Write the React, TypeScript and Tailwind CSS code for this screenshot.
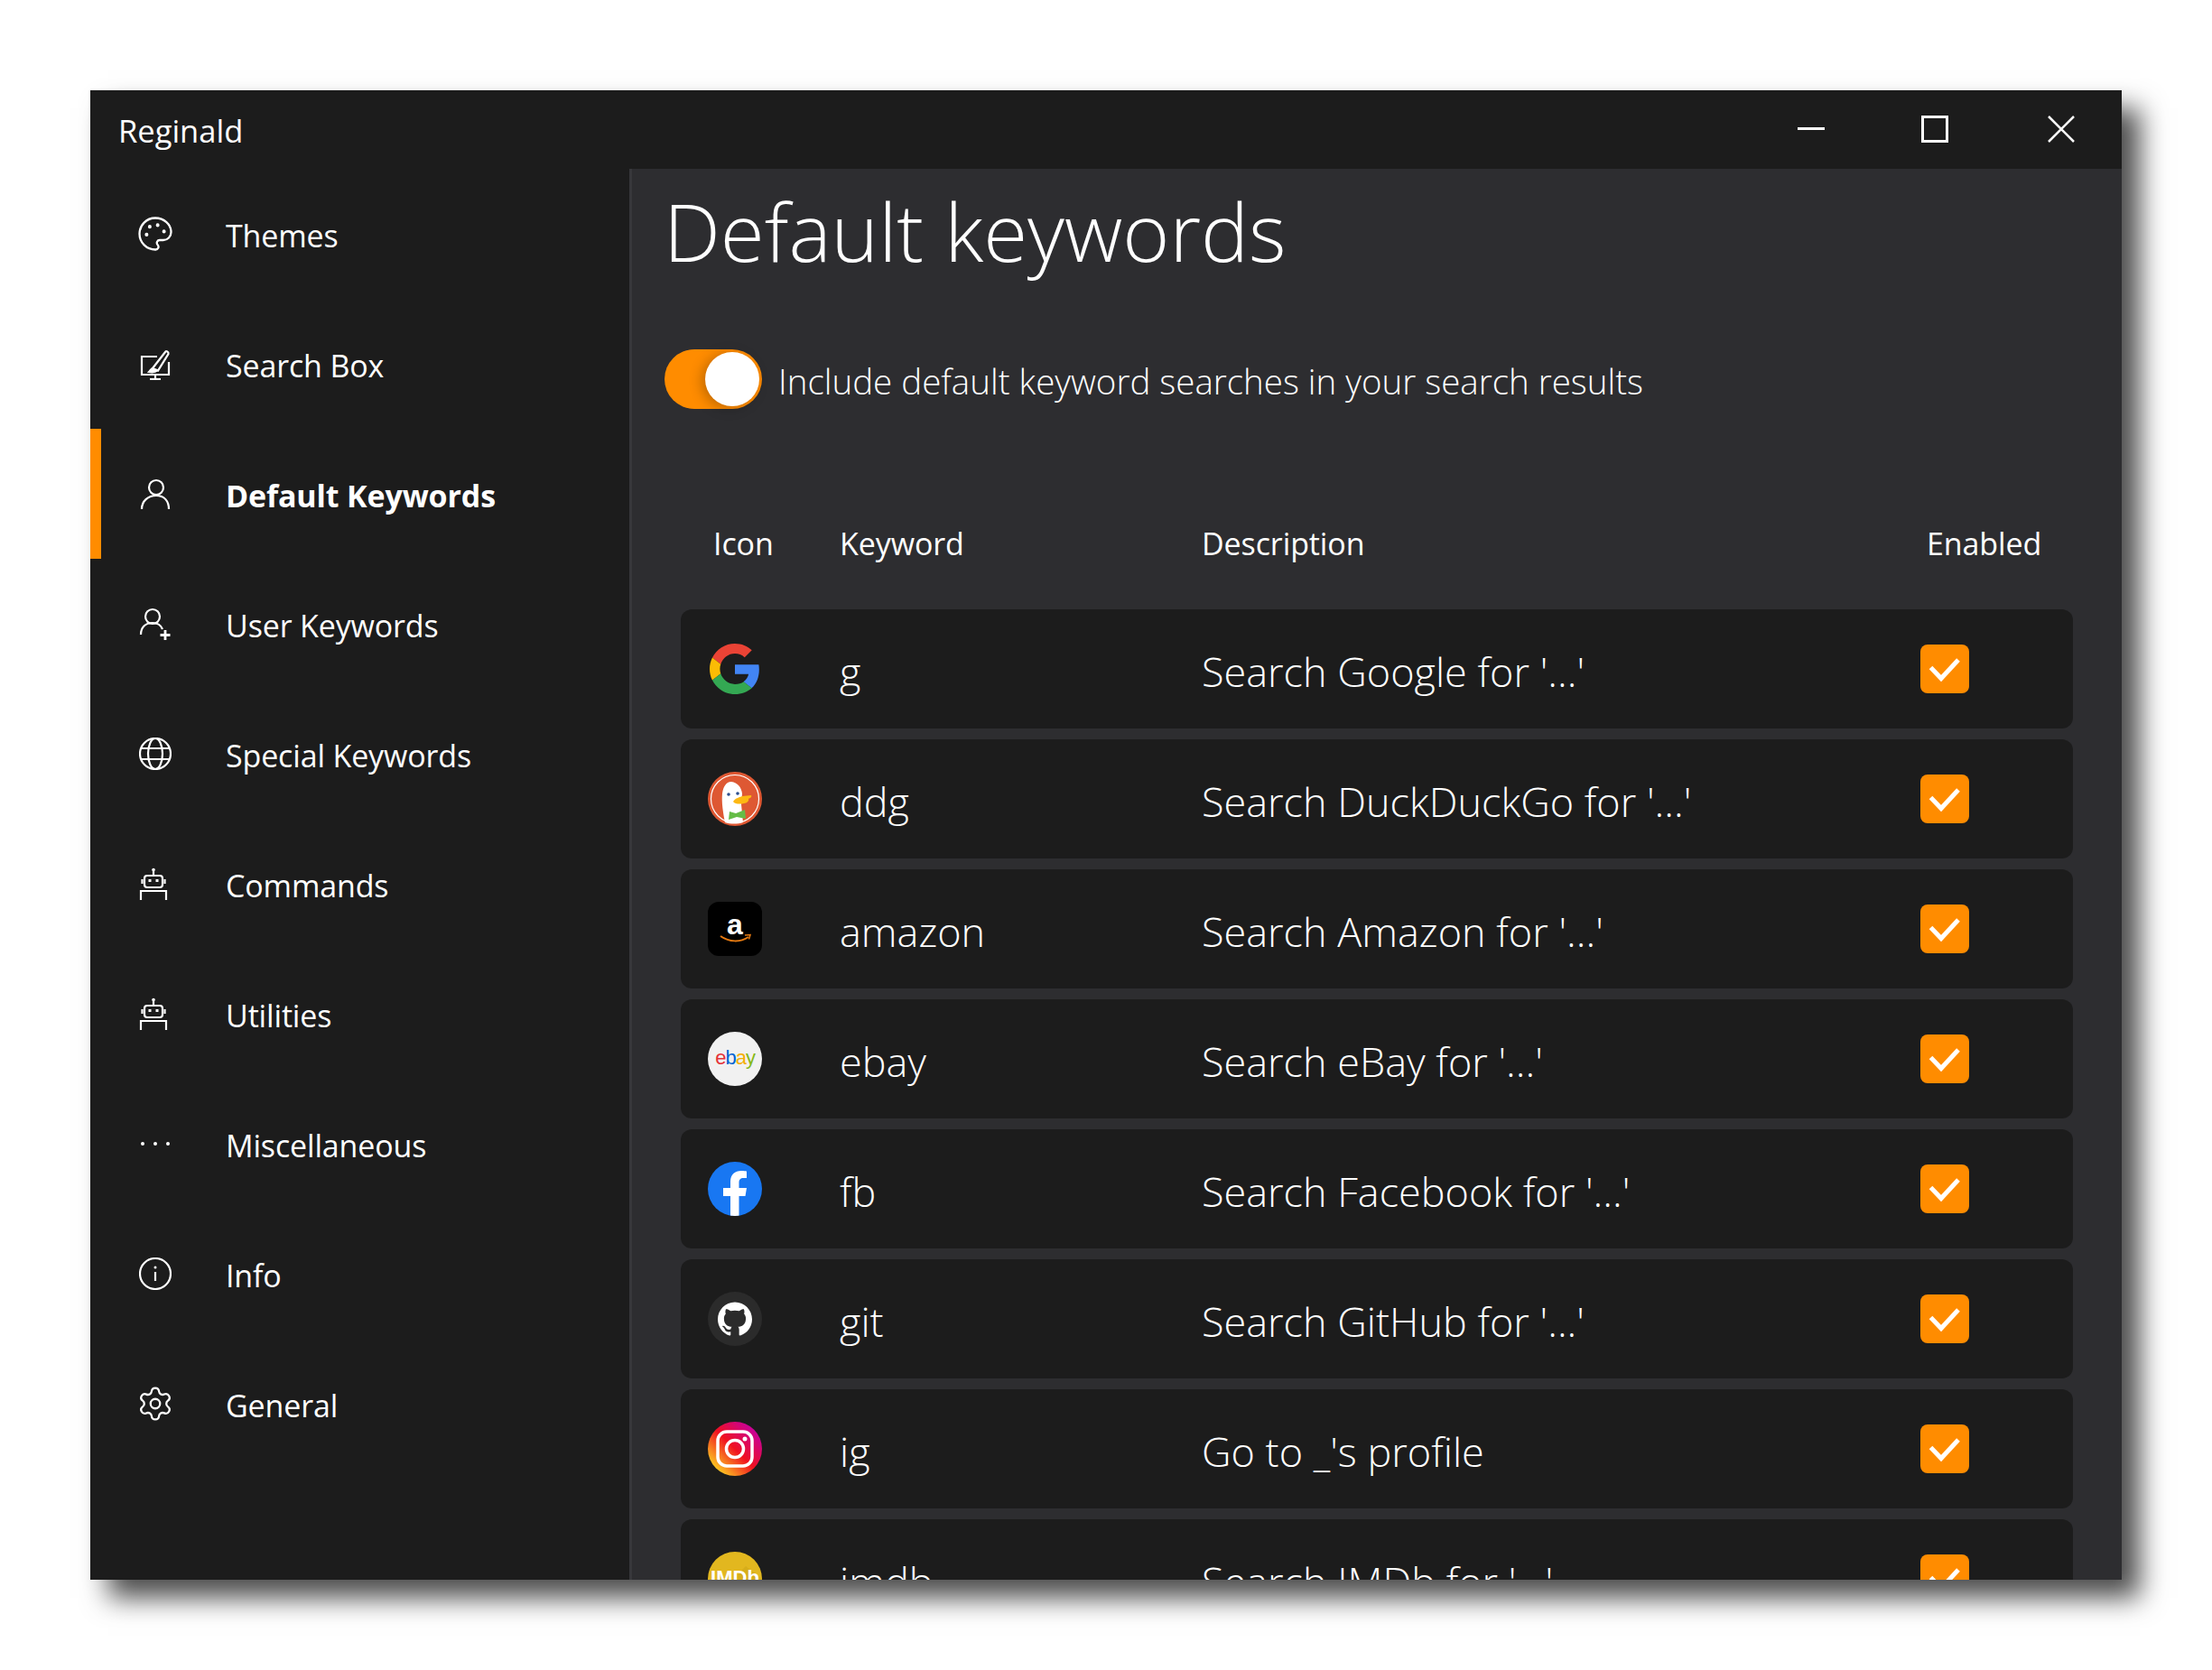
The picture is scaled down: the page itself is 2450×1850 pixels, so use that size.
import React from 'react';
import { Palette, Settings } from 'lucide-react';
import { SiGithub } from 'react-icons/si';

const iconProps = { width: 36, height: 36, viewBox: '0 0 36 36', fill: 'none', stroke: 'white', strokeWidth: 2.2 };

const SearchBoxIcon = () => (
  <svg {...iconProps}>
    <path d="M20 10H3v20h30V16" />
    <path d="M18 30v4M12 35h12" />
    <path d="M15 23l14-18c1-1.500 4-.5 3.500 2L21 25.500z" />
    <path d="M15 23c-2 .5-2.500 2.500-4 4 3 .5 7 .5 9-1.500" fill="white" />
  </svg>
);

const UserIcon = () => (
  <svg {...iconProps}>
    <circle cx="19" cy="11" r="8" />
    <path d="M3 35c0-9 7-15 16-15s14 6 14 15" />
  </svg>
);

const UserPlusIcon = () => (
  <svg {...iconProps}>
    <circle cx="15" cy="10" r="8" />
    <path d="M2 30c0-8 5-13 13-13 5 0 9 2 11 7" />
    <path d="M29 25v11M23.500 30.500h11" strokeWidth="2.800" />
  </svg>
);

const GlobeIcon = () => (
  <svg {...iconProps}>
    <circle cx="18" cy="18" r="17" />
    <ellipse cx="18" cy="18" rx="8" ry="17" />
    <path d="M3 12h30M3 24h30" />
  </svg>
);

const RobotIcon = () => (
  <svg {...iconProps}>
    <circle cx="16" cy="2.500" r="1.800" fill="white" stroke="none" />
    <path d="M16 3v6" />
    <rect x="6" y="9" width="20" height="13" rx="3" />
    <path d="M3.500 13v5M28.500 13v5" />
    <rect x="10.500" y="13" width="3" height="3" fill="white" stroke="none" />
    <rect x="18.500" y="13" width="3" height="3" fill="white" stroke="none" />
    <path d="M2 36v-10h28v10" />
  </svg>
);

const DotsIcon = () => (
  <svg {...iconProps}>
    <circle cx="4" cy="18" r="2" fill="white" stroke="none" />
    <circle cx="18" cy="18" r="2" fill="white" stroke="none" />
    <circle cx="32" cy="18" r="2" fill="white" stroke="none" />
  </svg>
);

const InfoIcon = () => (
  <svg {...iconProps}>
    <circle cx="18" cy="18" r="17" />
    <path d="M18 16v10" />
    <circle cx="18" cy="11" r="1.500" fill="white" stroke="none" />
  </svg>
);

const GoogleLogo = () => (
  <svg width="56" height="56" viewBox="0 0 48 48">
    <path fill="#EA4335" d="M24 9.500c3.540 0 6.710 1.220 9.210 3.600l6.850-6.850C35.900 2.380 30.470 0 24 0 14.620 0 6.510 5.380 2.560 13.220l7.980 6.190C12.430 13.720 17.740 9.500 24 9.500z" />
    <path fill="#4285F4" d="M46.980 24.550c0-1.570-.15-3.090-.38-4.550H24v9.020h12.940c-.58 2.960-2.260 5.480-4.780 7.180l7.730 6c4.510-4.180 7.090-10.360 7.090-17.650z" />
    <path fill="#FBBC05" d="M10.530 28.590c-.5-1.450-.78-2.990-.78-4.590s.27-3.140.78-4.590l-7.980-6.190C.92 16.460 0 20.120 0 24c0 3.880.92 7.540 2.560 10.780l7.970-6.190z" />
    <path fill="#34A853" d="M24 48c6.480 0 11.930-2.130 16.020-5.810l-7.730-6c-2.150 1.450-4.920 2.300-8.290 2.300-6.260 0-11.570-4.220-13.470-9.910l-7.980 6.190C6.510 42.620 14.620 48 24 48z" />
  </svg>
);

const DuckLogo = () => (
  <svg width="60" height="60" viewBox="0 0 60 60">
    <circle cx="30" cy="30" r="30" fill="#de5833" />
    <circle cx="30" cy="30" r="26.500" fill="none" stroke="white" strokeWidth="1.200" />
    <path d="M19 56c-2-10-4-22-3-32 1-7 4-13 10-13 7 1 11 6 12 13l-1 12 2 20c-6 2-14 2-20 0z" fill="white" />
    <circle cx="23" cy="25" r="1.800" fill="#2d4f8e" />
    <circle cx="33" cy="24" r="1.800" fill="#2d4f8e" />
    <path d="M28 33c2-4 8-5 10-6l10-1c1 2-1 3-3 4 1 2-2 5-5 5-4 1-10 1-12-2z" fill="#fdb813" />
    <path d="M24 44l7 2 10-4 1 10-10-2-9 3z" fill="#65bc46" />
  </svg>
);

const AmazonLogo = () => (
  <div className="w-[60px] h-[60px] rounded-xl bg-black flex items-center justify-center">
    <svg width="60" height="60" viewBox="0 0 60 60">
      <text x="30" y="36" textAnchor="middle" fill="white" fontSize="32" fontWeight="700" fontFamily="'Liberation Sans', sans-serif">a</text>
      <path d="M14 38c10 7 22 7 31 1" fill="none" stroke="#e47911" strokeWidth="2" />
      <path d="M41 37l6-.5-1.500 5" fill="none" stroke="#e47911" strokeWidth="1.500" />
    </svg>
  </div>
);

const EbayLogo = () => (
  <svg width="60" height="60" viewBox="0 0 60 60">
    <circle cx="30" cy="30" r="30" fill="#f1f1f1" />
    <text x="30" y="36" textAnchor="middle" fontSize="22" letterSpacing="-1" fontFamily="'Liberation Sans', sans-serif">
      <tspan fill="#e53238">e</tspan>
      <tspan fill="#0064d2">b</tspan>
      <tspan fill="#f5af02">a</tspan>
      <tspan fill="#86b817">y</tspan>
    </text>
  </svg>
);

const FacebookLogo = () => (
  <svg width="60" height="60" viewBox="0 0 60 60">
    <clipPath id="fb-clip"><circle cx="30" cy="30" r="30" /></clipPath>
    <circle cx="30" cy="30" r="30" fill="#1877f2" />
    <path clipPath="url(#fb-clip)" d="M25 60V38h-8v-9h8v-7c0-8 5-12 12-12 3 0 6 .5 6 .5V18h-3.500c-3.500 0-5 2-5 5v6h8.500l-1.500 9h-7v22z" fill="white" />
  </svg>
);

const GitLogo = () => (
  <div className="w-[60px] h-[60px] rounded-full bg-[#2b2b2b] flex items-center justify-center text-white">
    <SiGithub size={38} />
  </div>
);

const InstagramLogo = () => (
  <svg width="60" height="60" viewBox="0 0 60 60">
    <defs>
      <linearGradient id="ig-grad" x1="0.100" y1="0.900" x2="0.900" y2="0.100">
        <stop offset="0" stopColor="#ffdd22" />
        <stop offset="0.500" stopColor="#f01020" />
        <stop offset="1" stopColor="#c400a8" />
      </linearGradient>
    </defs>
    <circle cx="30" cy="30" r="30" fill="url(#ig-grad)" />
    <rect x="11" y="11" width="38" height="38" rx="10" fill="none" stroke="white" strokeWidth="3.500" />
    <circle cx="30" cy="30" r="9.500" fill="none" stroke="white" strokeWidth="3.500" />
    <circle cx="41" cy="19" r="2.500" fill="white" />
  </svg>
);

const ImdbLogo = () => (
  <svg width="60" height="60" viewBox="0 0 60 60">
    <circle cx="30" cy="30" r="30" fill="#e2b71f" />
    <path d="M60 30a30 30 0 0 1-30 30L14 44 42 16z" fill="#cfa617" opacity="0.600" />
    <text x="30" y="36" textAnchor="middle" fill="white" fontSize="22" fontWeight="700" fontFamily="'Liberation Sans', sans-serif">IMDb</text>
  </svg>
);

const navItems = [
  { label: 'Themes', icon: <Palette size={42} strokeWidth={1.300} className="-ml-[3px] -my-[3px]" /> },
  { label: 'Search Box', icon: <SearchBoxIcon /> },
  { label: 'Default Keywords', icon: <UserIcon />, active: true },
  { label: 'User Keywords', icon: <UserPlusIcon /> },
  { label: 'Special Keywords', icon: <GlobeIcon /> },
  { label: 'Commands', icon: <RobotIcon /> },
  { label: 'Utilities', icon: <RobotIcon /> },
  { label: 'Miscellaneous', icon: <DotsIcon /> },
  { label: 'Info', icon: <InfoIcon /> },
  { label: 'General', icon: <Settings size={42} strokeWidth={1.300} className="-ml-[3px] -my-[3px]" /> },
];

const rows = [
  { logo: <GoogleLogo />, keyword: 'g', desc: "Search Google for '...'" },
  { logo: <DuckLogo />, keyword: 'ddg', desc: "Search DuckDuckGo for '...'" },
  { logo: <AmazonLogo />, keyword: 'amazon', desc: "Search Amazon for '...'" },
  { logo: <EbayLogo />, keyword: 'ebay', desc: "Search eBay for '...'" },
  { logo: <FacebookLogo />, keyword: 'fb', desc: "Search Facebook for '...'" },
  { logo: <GitLogo />, keyword: 'git', desc: "Search GitHub for '...'" },
  { logo: <InstagramLogo />, keyword: 'ig', desc: "Go to _'s profile" },
  { logo: <ImdbLogo />, keyword: 'imdb', desc: "Search IMDb for '...'" },
];

const NavItem = ({ label, icon, active }: any) => (
  <div className={`h-[144px] flex items-center border-l-[12px] ${active ? 'border-[#ff8c00]' : 'border-transparent'}`}>
    <div className="w-[138px] pl-[42px] flex items-center shrink-0">{icon}</div>
    <span className={`text-[34px] leading-none tracking-[-0.15px] pt-[4px] ${active ? 'font-bold' : 'font-normal'}`}>{label}</span>
  </div>
);

const KeywordRow = ({ logo, keyword, desc }: any) => (
  <div className="h-[132px] shrink-0 rounded-xl bg-[#1c1c1c] pl-[30px] grid grid-cols-[146px_401px_796px_54px] items-center">
    <div className="w-[60px] h-[60px] flex items-center justify-center">{logo}</div>
    <div className="text-[45px] font-light leading-none pt-[5px]">{keyword}</div>
    <div className="text-[45px] font-light leading-none pt-[5px]">{desc}</div>
    <div className="w-[54px] h-[54px] rounded-lg bg-[#ff8c00]">
      <svg width="54" height="54" viewBox="0 0 54 54">
        <path d="M11.500 25.500L23 37.500 42 17" fill="none" stroke="white" strokeWidth="5" />
      </svg>
    </div>
  </div>
);

export default function App() {
  return (
    <div className="min-h-[1850px] bg-white pt-[100px] pl-[100px] font-['Open_Sans',sans-serif] text-white">
      <div className="w-[2250px] h-[1650px] bg-[#1c1c1c] flex flex-col overflow-hidden shadow-[20px_20px_28px_rgba(0,0,0,0.7)]">
        {/* Title bar */}
        <div className="h-[87px] shrink-0 flex items-center justify-between pl-[31px] pr-[52px]">
          <span className="text-[34.500px] leading-none pt-[4px]">Reginald</span>
          <div className="flex items-center gap-[107px] -mt-[2px]">
            <div className="w-[30px] h-[3px] bg-white" />
            <div className="w-[30px] h-[30px] border-[3px] border-white" />
            <svg width="30" height="30" viewBox="0 0 30 30" className="ml-[3px]">
              <path d="M1 1l28 28M29 1L1 29" stroke="white" strokeWidth="2.500" />
            </svg>
          </div>
        </div>

        <div className="flex flex-1 min-h-0">
          {/* Sidebar */}
          <div className="w-[597px] shrink-0">
            {navItems.map((item) => <NavItem key={item.label} {...item} />)}
          </div>

          {/* Main */}
          <div className="flex-1 min-w-0 bg-[#2d2d30] border-l-[3px] border-[#37373b] overflow-hidden">
            <div className="pl-[35px] h-[141px] flex items-center">
              <h1 className="text-[89px] font-light leading-none pb-[4px]">Default keywords</h1>
            </div>

            <div className="mt-[59px] pl-[36px] flex items-center">
              <div className="w-[108px] h-[66px] rounded-full bg-[#ff8c00] flex items-center justify-end pr-[3px]">
                <div className="w-[60px] h-[60px] rounded-full bg-white shadow-[-4px_2px_14px_rgba(0,0,0,0.25)]" />
              </div>
              <span className="ml-[18px] text-[38.500px] font-light leading-none pt-[5px]">Include default keyword searches in your search results</span>
            </div>

            <div className="mt-[113px] ml-[54px] w-[1542px] h-[72px] pl-[36px] grid grid-cols-[140px_401px_803px_auto] items-center text-[34px] tracking-[-0.1px]">
              <span>Icon</span>
              <span>Keyword</span>
              <span>Description</span>
              <span>Enabled</span>
            </div>

            <div className="mt-[37px] ml-[54px] w-[1542px] flex flex-col gap-[12px]">
              {rows.map((row) => <KeywordRow key={row.keyword} {...row} />)}
            </div>
          </div>
        </div>
      </div>
    </div>
  );
}
